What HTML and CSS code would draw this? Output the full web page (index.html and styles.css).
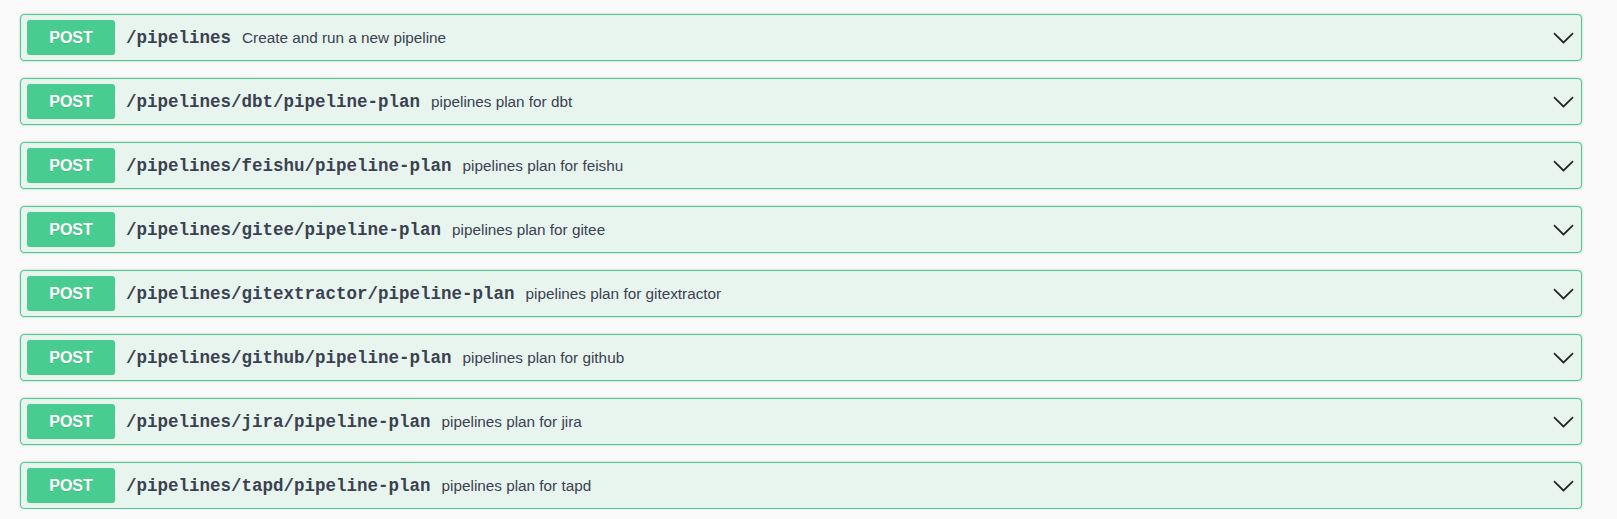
FILE: index.html
```html
<!DOCTYPE html>
<html>
<head>
<meta charset="utf-8">
<link rel="stylesheet" href="styles.css">
</head>
<body>
<div class="ops">
  <div class="opblock">
    <span class="method">POST</span>
    <span class="path">/pipelines</span>
    <span class="desc">Create and run a new pipeline</span>
    <svg class="arrow" viewBox="0 0 20 20" width="23" height="23"><path d="M17.418 6.109c.272-.268.709-.268.979 0s.271.701 0 .969l-7.908 7.83c-.27.268-.707.268-.979 0l-7.908-7.83c-.27-.268-.27-.701 0-.969.271-.268.709-.268.979 0L10 13.25l7.418-7.141z"/></svg>
  </div>
  <div class="opblock">
    <span class="method">POST</span>
    <span class="path">/pipelines/dbt/pipeline-plan</span>
    <span class="desc">pipelines plan for dbt</span>
    <svg class="arrow" viewBox="0 0 20 20" width="23" height="23"><path d="M17.418 6.109c.272-.268.709-.268.979 0s.271.701 0 .969l-7.908 7.83c-.27.268-.707.268-.979 0l-7.908-7.83c-.27-.268-.27-.701 0-.969.271-.268.709-.268.979 0L10 13.25l7.418-7.141z"/></svg>
  </div>
  <div class="opblock">
    <span class="method">POST</span>
    <span class="path">/pipelines/feishu/pipeline-plan</span>
    <span class="desc">pipelines plan for feishu</span>
    <svg class="arrow" viewBox="0 0 20 20" width="23" height="23"><path d="M17.418 6.109c.272-.268.709-.268.979 0s.271.701 0 .969l-7.908 7.83c-.27.268-.707.268-.979 0l-7.908-7.83c-.27-.268-.27-.701 0-.969.271-.268.709-.268.979 0L10 13.25l7.418-7.141z"/></svg>
  </div>
  <div class="opblock">
    <span class="method">POST</span>
    <span class="path">/pipelines/gitee/pipeline-plan</span>
    <span class="desc">pipelines plan for gitee</span>
    <svg class="arrow" viewBox="0 0 20 20" width="23" height="23"><path d="M17.418 6.109c.272-.268.709-.268.979 0s.271.701 0 .969l-7.908 7.83c-.27.268-.707.268-.979 0l-7.908-7.83c-.27-.268-.27-.701 0-.969.271-.268.709-.268.979 0L10 13.25l7.418-7.141z"/></svg>
  </div>
  <div class="opblock">
    <span class="method">POST</span>
    <span class="path">/pipelines/gitextractor/pipeline-plan</span>
    <span class="desc">pipelines plan for gitextractor</span>
    <svg class="arrow" viewBox="0 0 20 20" width="23" height="23"><path d="M17.418 6.109c.272-.268.709-.268.979 0s.271.701 0 .969l-7.908 7.83c-.27.268-.707.268-.979 0l-7.908-7.83c-.27-.268-.27-.701 0-.969.271-.268.709-.268.979 0L10 13.25l7.418-7.141z"/></svg>
  </div>
  <div class="opblock">
    <span class="method">POST</span>
    <span class="path">/pipelines/github/pipeline-plan</span>
    <span class="desc">pipelines plan for github</span>
    <svg class="arrow" viewBox="0 0 20 20" width="23" height="23"><path d="M17.418 6.109c.272-.268.709-.268.979 0s.271.701 0 .969l-7.908 7.83c-.27.268-.707.268-.979 0l-7.908-7.83c-.27-.268-.27-.701 0-.969.271-.268.709-.268.979 0L10 13.25l7.418-7.141z"/></svg>
  </div>
  <div class="opblock">
    <span class="method">POST</span>
    <span class="path">/pipelines/jira/pipeline-plan</span>
    <span class="desc">pipelines plan for jira</span>
    <svg class="arrow" viewBox="0 0 20 20" width="23" height="23"><path d="M17.418 6.109c.272-.268.709-.268.979 0s.271.701 0 .969l-7.908 7.83c-.27.268-.707.268-.979 0l-7.908-7.83c-.27-.268-.27-.701 0-.969.271-.268.709-.268.979 0L10 13.25l7.418-7.141z"/></svg>
  </div>
  <div class="opblock">
    <span class="method">POST</span>
    <span class="path">/pipelines/tapd/pipeline-plan</span>
    <span class="desc">pipelines plan for tapd</span>
    <svg class="arrow" viewBox="0 0 20 20" width="23" height="23"><path d="M17.418 6.109c.272-.268.709-.268.979 0s.271.701 0 .969l-7.908 7.83c-.27.268-.707.268-.979 0l-7.908-7.83c-.27-.268-.27-.701 0-.969.271-.268.709-.268.979 0L10 13.25l7.418-7.141z"/></svg>
  </div>
</div>
</body>
</html>
```

FILE: styles.css
```css
html, body {
  margin: 0;
  padding: 0;
  background: #fafafa;
}

.ops {
  padding: 14px 35px 0 20px;
  display: flex;
  flex-direction: column;
  gap: 17px;
}

.opblock {
  display: flex;
  align-items: center;
  height: 47px;
  box-sizing: border-box;
  padding: 5px 6px;
  border: 1px solid #49cc90;
  border-radius: 4px;
  background: #e8f5ef;
  box-shadow: 0 0 3px rgba(0, 0, 0, 0.19);
  color: #3b4151;
}

.method {
  flex: none;
  width: 88px;
  height: 35px;
  line-height: 35px;
  background: #49cc90;
  border-radius: 3px;
  color: #fff;
  text-align: center;
  font-family: "Liberation Sans", Arial, sans-serif;
  font-weight: bold;
  font-size: 16px;
  text-shadow: 0 1px 0 rgba(0, 0, 0, 0.1);
}

.path {
  flex: none;
  padding: 0 10px 0 11px;
  font-family: "Liberation Mono", "Courier New", monospace;
  font-weight: bold;
  font-size: 17.5px;
  color: #3b4151;
}

.desc {
  flex: 1;
  padding-left: 1px;
  font-family: "Liberation Sans", Arial, sans-serif;
  font-size: 15.3px;
  color: #3b4151;
}

.arrow {
  flex: none;
  fill: #222;
}
```
